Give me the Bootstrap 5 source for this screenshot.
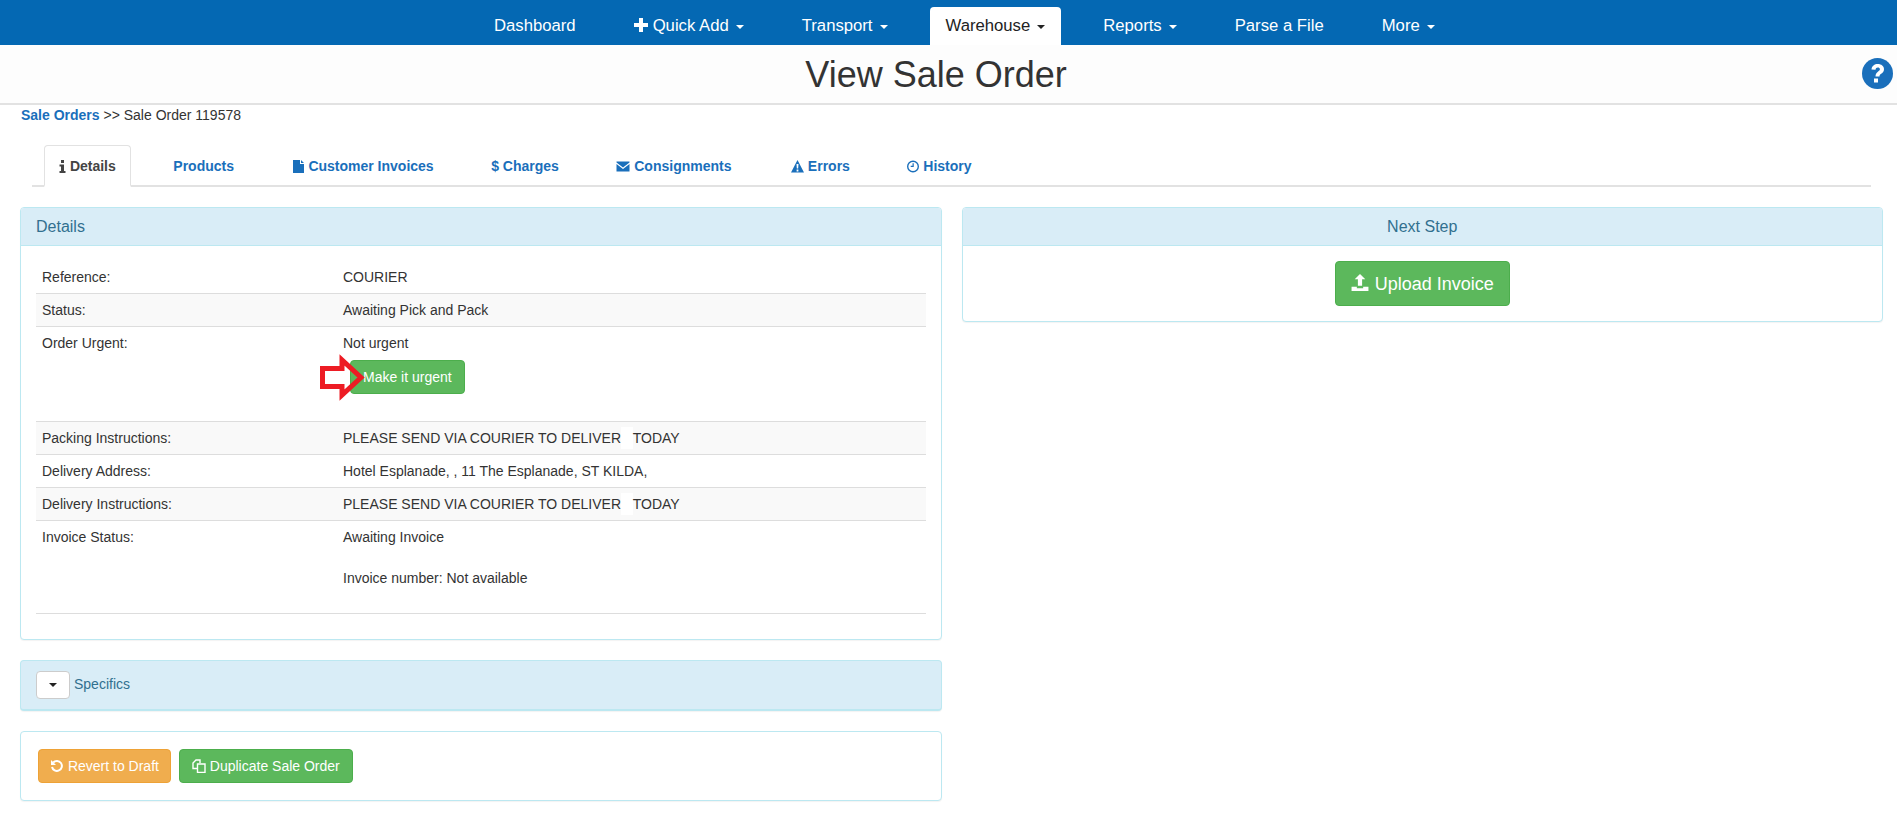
<!DOCTYPE html>
<html lang="en">
<head>
<meta charset="utf-8">
<title>View Sale Order</title>
<link href="https://cdn.jsdelivr.net/npm/bootstrap@5.3.0/dist/css/bootstrap.min.css" rel="stylesheet">
<style>
html,body{height:813px;overflow:hidden}
body{font-family:"Liberation Sans",Arial,sans-serif;font-size:14px;line-height:20px;color:#333;background:#fff}
a{text-decoration:none}
.topbar{background:#0468b3;height:45px;padding-top:7px;padding-left:478px;gap:26px;border:0;flex-wrap:nowrap}
.topbar .nav-link{color:#fff;font-size:16.7px;line-height:22px;padding:8px 16px;height:38px;border:0;border-radius:4px 4px 0 0;background:none;white-space:nowrap}
.topbar .nav-link.active{color:#222;background:#fff;border:0}
.topbar .dropdown-toggle::after{margin-left:7px;vertical-align:2px;border-top-width:4px;border-left-width:4px;border-right-width:4px}
.topbar .glyph{width:14px;height:14px;vertical-align:-1px;margin-right:5px}
.pagehead{height:60px;background:#fdfdfd;border-bottom:2px solid #e2e2e2;position:relative}
.pagehead h1{font-size:36px;line-height:60px;margin:0;color:#333;font-weight:400;text-align:center;padding-right:25px}
.helpicon{position:absolute;top:13px;right:4px;width:31px;height:31px}
.crumbs{font-size:14px;line-height:18px;padding:1px 0 0 21px;color:#333}
.crumbs a{font-weight:700;color:#1a6fbb}
.tabrow{margin:21px 26px 20px 32px;padding-left:12px;gap:27.5px;height:42px;border-bottom:2px solid #e2e2e2;flex-wrap:nowrap}
.tabrow .nav-link{font-size:14px;font-weight:700;color:#1a6fbb;padding:10px 14px 0;height:42px;line-height:20px;border:1px solid transparent;border-radius:4px 4px 0 0;margin:0;white-space:nowrap}
.tabrow .nav-link.active{color:#444;border-color:#e2e2e2 #e2e2e2 #fff;border-bottom:2px solid #fff;background:#fff}
.tabrow .laterab{margin-left:2px}
.tabrow svg{width:13px;height:13px;vertical-align:-2px;margin-right:0;fill:currentColor}
.columns{padding:0 14px 0 20px;gap:20px}
.columns>div{flex:1 1 0;min-width:0}
.infopanel{border:1px solid #bce8f1;border-radius:4px;background:#fff;box-shadow:0 1px 1px rgba(0,0,0,.05)}
.infopanel>.card-header{background:#d9edf7;border:0;border-bottom:1px solid #bce8f1;color:#31708f;font-size:16px;line-height:20px;padding:9px 15px;height:38px;border-radius:3px 3px 0 0}
.detailbody{padding:14px 15px 25px}
.detailtable{margin:0;font-size:14px;color:#333;--bs-table-bg:transparent;border-color:#ddd}
.detailtable td{padding:6px 5px 6px 6px;line-height:20px;border:0;border-bottom:1px solid #ddd;color:#333;font-size:14px;height:33px}
.detailtable tr:first-child td{padding-top:7px;padding-bottom:5px}
.detailtable tr:nth-child(even) td{background:#f9f9f9}
.detailtable td:first-child{width:301px}
.detailtable p{margin:0 0 21px}
.detailtable p:last-child{margin-bottom:19px}
.gapfill{background:#fff;padding:3px 0}
.urgentwrap{position:relative;display:inline-block;margin:7px 0 21px 7px}
.btnok,.btnok:hover{background:#5cb85c;border:1px solid #4cae4c;color:#fff;border-radius:4px}
.btnwarn,.btnwarn:hover{background:#f0ad4e;border:1px solid #eea236;color:#fff;border-radius:4px}
.smallbtn{font-size:14px;line-height:20px;padding:6px 12px;height:34px}
.redarrow{position:absolute;left:-30px;top:-3px;width:44px;height:41px;overflow:visible}
.nextbody{padding:15px 15px 14px;text-align:center;height:75px}
.bigbtn{font-size:18px;line-height:24px;padding:10px 14px 10px 13px;height:45px;width:175px;white-space:nowrap}
.bigbtn svg{width:20px;height:19px;vertical-align:-2px;fill:#fff}
.specpanel{margin-top:20px;height:51px;background:#d9edf7;padding:10px 15px;color:#31708f;border-bottom-width:2px;line-height:22px}
.caretbtn{width:34px;height:28px;padding:0;background:#fff;border:1px solid #ccc;border-radius:4px;display:inline-flex;align-items:center;justify-content:center;margin-right:4px;vertical-align:middle}
.caretbtn i{display:block;border-top:4px solid #222;border-left:4px solid transparent;border-right:4px solid transparent}
.actionpanel{margin-top:20px;height:70px;padding:17px 17px;gap:8px}
.actionpanel svg{width:14px;height:14px;vertical-align:-2px;fill:none;stroke:#fff;stroke-width:1.4}
.actionpanel .btnwarn{padding-left:11px;padding-right:11px}
</style>
</head>
<body>
<ul class="nav topbar">
  <li class="nav-item"><a class="nav-link" href="#">Dashboard</a></li>
  <li class="nav-item"><a class="nav-link dropdown-toggle" href="#"><svg class="glyph" viewBox="0 0 14 14"><path fill="#fff" d="M5 0h4v5h5v4H9v5H5V9H0V5h5z"/></svg>Quick Add</a></li>
  <li class="nav-item"><a class="nav-link dropdown-toggle" href="#">Transport</a></li>
  <li class="nav-item"><a class="nav-link active dropdown-toggle" href="#">Warehouse</a></li>
  <li class="nav-item"><a class="nav-link dropdown-toggle" href="#">Reports</a></li>
  <li class="nav-item"><a class="nav-link" href="#">Parse a File</a></li>
  <li class="nav-item"><a class="nav-link dropdown-toggle" href="#">More</a></li>
</ul>
<div class="pagehead">
  <h1>View Sale Order</h1>
  <svg class="helpicon" viewBox="0 0 31 31"><circle cx="15.5" cy="15.5" r="15.5" fill="#1a6fbb"/><path fill="#fff" d="M9.5 11.5c.3-3.6 3-5.500 6.300-5.500 3.500 0 6.200 2.100 6.200 5.200 0 2.400-1.300 3.500-2.800 4.600-1.200.9-1.700 1.400-1.700 2.700h-4c0-2.500.8-3.600 2.400-4.800 1.200-.9 2-1.500 2-2.400 0-1-.9-1.700-2.100-1.700-1.300 0-2.100.8-2.300 2.200zM12 20.500h4v4h-4z"/></svg>
</div>
<div class="crumbs"><a href="#">Sale Orders</a> &gt;&gt; Sale Order 119578</div>
<ul class="nav nav-tabs tabrow">
  <li class="nav-item"><a class="nav-link active" href="#"><svg viewBox="0 0 7 13" style="width:7px"><path d="M2 0h3v3H2zM.5 4.500H5V11h1.500v2H.500v-2H2V6.500H.5z"/></svg> Details</a></li>
  <li class="nav-item"><a class="nav-link" href="#">Products</a></li>
  <li class="nav-item"><a class="nav-link" href="#"><svg viewBox="0 0 13 13"><path d="M1 0h7v4h4v9H1zM9 0l3 3H9z"/></svg> Customer Invoices</a></li>
  <li class="nav-item"><a class="nav-link" href="#">$ Charges</a></li>
  <li class="nav-item"><a class="nav-link" href="#"><svg viewBox="0 0 13 13" style="width:14px"><path d="M0 1.500h13v1L6.500 7.500 0 2.500zM0 4l6.500 5L13 4v7.500H0z"/></svg> Consignments</a></li>
  <li class="nav-item laterab"><a class="nav-link" href="#"><svg viewBox="0 0 13 13"><path fill-rule="evenodd" d="M6.500 0L13 12.500H0zM5.500 4l.3 4.500h1.400L7.500 4zM5.600 9.500v2h1.800v-2z"/></svg> Errors</a></li>
  <li class="nav-item"><a class="nav-link" href="#"><svg viewBox="0 0 13 13" style="width:12px"><path fill-rule="evenodd" d="M6.500 0a6.500 6.500 0 110 13 6.500 6.500 0 010-13zm0 1.500a5 5 0 100 10 5 5 0 000-10zM6 3h1.300v4H4V5.800h2z"/></svg> History</a></li>
</ul>
<div class="d-flex columns">
  <div>
    <div class="card infopanel">
      <div class="card-header">Details</div>
      <div class="detailbody">
        <table class="table detailtable">
          <tbody>
            <tr><td>Reference:</td><td>COURIER</td></tr>
            <tr><td>Status:</td><td>Awaiting Pick and Pack</td></tr>
            <tr><td>Order Urgent:</td><td>Not urgent<br>
              <span class="urgentwrap"><a class="btn btnok smallbtn" href="#">Make it urgent</a>
                <svg class="redarrow" viewBox="0 0 44 41"><path d="M2.500 11.500H22V3L41 20.500 22 38V29.500H2.500z" fill="none" stroke="#ed1c24" stroke-width="5"/></svg>
              </span></td></tr>
            <tr><td>Packing Instructions:</td><td>PLEASE SEND VIA COURIER TO DELIVER<span class="gapfill">&nbsp;&nbsp;&nbsp;</span>TODAY</td></tr>
            <tr><td>Delivery Address:</td><td>Hotel Esplanade, , 11 The Esplanade, ST KILDA,</td></tr>
            <tr><td>Delivery Instructions:</td><td>PLEASE SEND VIA COURIER TO DELIVER<span class="gapfill">&nbsp;&nbsp;&nbsp;</span>TODAY</td></tr>
            <tr><td>Invoice Status:</td><td><p>Awaiting Invoice</p><p>Invoice number: Not available</p></td></tr>
          </tbody>
        </table>
      </div>
    </div>
    <div class="card infopanel specpanel d-block"><button class="caretbtn" type="button"><i></i></button>Specifics</div>
    <div class="card infopanel actionpanel d-flex flex-row align-items-start">
      <a class="btn btnwarn smallbtn" href="#"><svg viewBox="0 0 14 14"><path d="M3.200 3.500A5 5 0 112 8" stroke-width="2"/><path d="M1 1v5h5" fill="#fff" stroke="none"/></svg> Revert to Draft</a>
      <a class="btn btnok smallbtn" href="#"><svg viewBox="0 0 14 14"><path d="M5 9.500H1V4L4 1h4v3"/><path d="M5.500 5H13v8.500H5.500z"/></svg> Duplicate Sale Order</a>
    </div>
  </div>
  <div>
    <div class="card infopanel">
      <div class="card-header text-center">Next Step</div>
      <div class="nextbody"><a class="btn btnok bigbtn" href="#"><svg viewBox="0 0 18 18"><path d="M9 1l5 5h-3v6H7V6H4zM1 13h5v1.500h6V13h5v4H1z"/></svg> Upload Invoice</a></div>
    </div>
  </div>
</div>
</body>
</html>
